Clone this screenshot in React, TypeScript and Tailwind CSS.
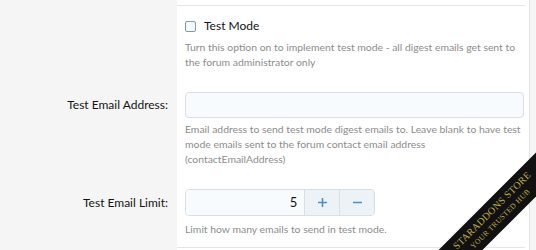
import React from "react";

export default function App() {
  const font = { fontFamily: 'Lato, "Segoe UI", "Noto Sans", sans-serif' };
  return (
    <div className="relative w-[536px] h-[250px] overflow-hidden bg-[#f5f5f5]" style={font}>
      <div className="flex h-full">
        <div className="w-[177px] shrink-0 flex flex-col items-end pr-[9px] text-[12px] text-[#141414]">
          <div className="h-[97px]" />
          <div className="h-[16px] leading-[16px]">Test Email Address:</div>
          <div className="h-[82px]" />
          <div className="h-[16px] leading-[16px]">Test Email Limit:</div>
        </div>
        <div className="w-[353px] shrink-0 bg-white border-r border-[#e3e3e3] flex flex-col">
          <div className="mt-[5px] mr-[4px] h-px bg-[#e6e6e6]" />
          <div className="pl-[8px] pr-[5px] flex flex-col">
            <div className="flex items-center gap-[8px] mt-[10px] h-[20px]">
              <div className="w-[11px] h-[11px] border border-[#7f98ad] rounded-[2px] bg-[#f7fafc]" />
              <span className="text-[12px] text-[#141414]">Test Mode</span>
            </div>
            <div className="text-[10.4px] leading-[14.5px] text-[#8c8c8c] mt-[4px]">
              Turn this option on to implement test mode - all digest emails get sent to the forum administrator only
            </div>
            <div className="mt-[23px] h-[26px] rounded-[4px] border border-[#d8dfe6] bg-[#f7fbfd]" />
            <div className="text-[10.4px] leading-[15px] text-[#8c8c8c] mt-[4px]">
              Email address to send test mode digest emails to. Leave blank to have test mode emails sent to the forum contact email address (contactEmailAddress)
            </div>
            <div className="mt-[22px] flex h-[27px] w-[190px] rounded-[4px] border border-[#d8dfe6] overflow-hidden">
              <div className="w-[119px] bg-[#f7fbfd] flex items-center justify-end pr-[7px] text-[13px] text-[#141414]">5</div>
              <div className="w-[35px] border-l border-[#d8dfe6] bg-[#edf2f7] flex items-center justify-center text-[#4a8fd0]">
                <svg width="11" height="11" viewBox="0 0 11 11"><path d="M5.5 1v9M1 5.5h9" stroke="currentColor" strokeWidth="1.6" /></svg>
              </div>
              <div className="w-[35px] border-l border-[#d8dfe6] bg-[#edf2f7] flex items-center justify-center text-[#4a8fd0]">
                <svg width="11" height="11" viewBox="0 0 11 11"><path d="M1 5.5h9" stroke="currentColor" strokeWidth="1.6" /></svg>
              </div>
            </div>
            <div className="text-[10.4px] leading-[15px] text-[#8c8c8c] mt-[6px]">
              Limit how many emails to send in test mode.
            </div>
          </div>
          <div className="mt-auto mb-[2px] mr-[4px] h-px bg-[#e6e6e6]" />
        </div>
      </div>
      <div
        className="absolute left-[376px] top-[199px] w-[240px] h-[31px] bg-[#111] -rotate-[45deg] flex flex-col items-center justify-center leading-none text-[#c2b04a] uppercase"
        style={{ fontFamily: '"Liberation Serif", serif' }}
      >
        <div className="text-[10px] tracking-[0.3px]">Staraddons Store</div>
        <div className="text-[7.5px] tracking-[0.4px] mt-[3px]">Your Trusted Hub</div>
      </div>
    </div>
  );
}
